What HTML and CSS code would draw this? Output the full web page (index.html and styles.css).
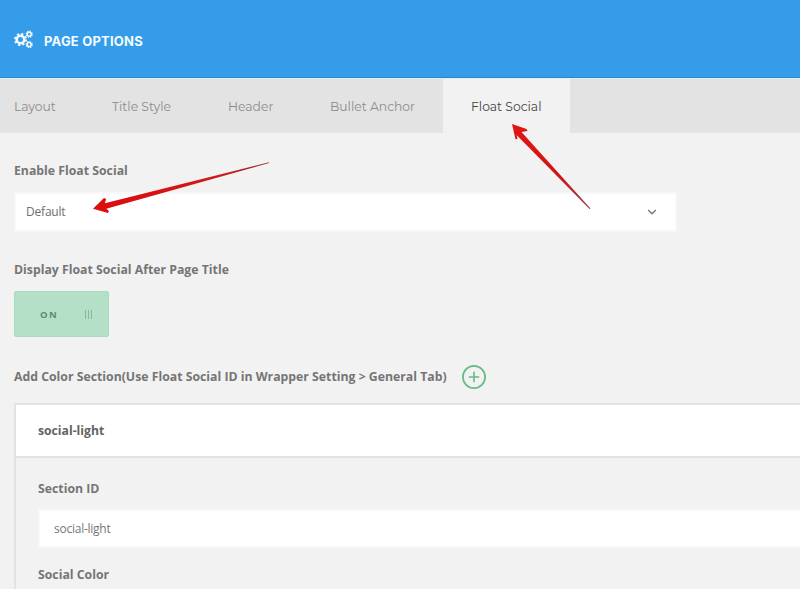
FILE: index.html
```html
<!DOCTYPE html>
<html lang="en">
<head>
<meta charset="utf-8">
<title>Page Options</title>
<link rel="stylesheet" href="styles.css">
</head>
<body>
<header class="header">
  <svg class="gears" width="20" height="19" viewBox="0 0 20 19" fill="none" stroke="#f4fbff">
    <circle cx="6.5" cy="9.5" r="3.8" stroke-width="2.6"/>
    <circle cx="6.5" cy="9.5" r="5.6" stroke-width="1.8" stroke-dasharray="2.2 2.2"/>
    <circle cx="15.2" cy="4.2" r="2" stroke-width="1.5"/>
    <circle cx="15.2" cy="4.2" r="3" stroke-width="1.2" stroke-dasharray="1.3 1.05"/>
    <circle cx="15.2" cy="14.6" r="2" stroke-width="1.5"/>
    <circle cx="15.2" cy="14.6" r="3" stroke-width="1.2" stroke-dasharray="1.3 1.05"/>
  </svg>
  <h1 class="title">PAGE OPTIONS</h1>
</header>
<nav class="tabs">
  <a class="tab">Layout</a>
  <a class="tab tab-title">Title Style</a>
  <a class="tab tab-header">Header</a>
  <a class="tab tab-bullet">Bullet Anchor</a>
  <a class="tab active">Float Social</a>
</nav>
<main class="content">
  <h2 class="label">Enable Float Social</h2>
  <div class="select">
    <span>Default</span>
    <svg width="10" height="8" viewBox="0 0 10 8" fill="none" stroke="#777" stroke-width="1.4"><path d="M1.2 2 5 5.8 8.8 2"/></svg>
  </div>
  <h2 class="label label-display">Display Float Social After Page Title</h2>
  <div class="toggle"><span>ON</span><i class="grip"></i></div>
  <div class="add-row">
    <h2 class="label label-add">Add Color Section(Use Float Social ID in Wrapper Setting &gt; General Tab)</h2>
    <svg width="26" height="26" viewBox="0 0 26 26" fill="none" stroke="#66bb7f"><circle cx="13" cy="13" r="11.1" stroke-width="1.7"/><path d="M7.8 13h10.4M13 7.8v10.4" stroke-width="1.6"/></svg>
  </div>
  <section class="panel">
    <h3 class="panel-title">social-light</h3>
    <div class="panel-body">
      <h2 class="label">Section ID</h2>
      <div class="field">social-light</div>
      <h2 class="label">Social Color</h2>
    </div>
  </section>
</main>
<svg class="arrows" width="800" height="589" viewBox="0 0 800 589">
  <defs>
    <linearGradient id="up" x1="0" y1="0" x2="1" y2="1"><stop offset="0" stop-color="#e31515"/><stop offset=".6" stop-color="#d01414"/><stop offset="1" stop-color="#963f48"/></linearGradient>
    <linearGradient id="left" x1="0" y1="0" x2="1" y2="0"><stop offset="0" stop-color="#dc0d0d"/><stop offset=".7" stop-color="#d01818"/><stop offset="1" stop-color="#9c2d32"/></linearGradient>
  </defs>
  <path fill="url(#up)" d="M512 124 526.5 129 527.5 131 521.5 132 590.5 208.5 589.5 209 516.8 135.2 517.5 139 515.5 139.3Z"/>
  <path fill="url(#left)" d="M93 208.7 104 198 106.2 199 104.8 203.2 269 162.2 269 163 106.3 208.7 109 211 108 213Z"/>
</svg>
</body>
</html>
```
FILE: styles.css
```css
* { box-sizing: border-box; }
body {
  margin: 0;
  height: 589px;
  overflow: hidden;
  position: relative;
  background: #f2f2f2;
  font-family: "Open Sans", sans-serif;
  color: #6e6e6e;
}
.header {
  height: 78px;
  padding: 0 0 0 14px;
  display: flex;
  align-items: center;
  gap: 10px;
  background: #349ce8;
  border-bottom: 1px solid #2b89d0;
}
.gears { margin-top: 1px; }
.title {
  margin: 4px 0 0;
  font: 700 13px/20px Inter, sans-serif;
  letter-spacing: .2px;
  color: #f4fbff;
}
.tabs {
  height: 55px;
  display: flex;
  background: #e3e3e3;
  border-top: 1px solid #e6edf0;
  font: 400 12.35px/55px Montserrat, Inter, sans-serif;
  color: #8c8c8c;
}
.tab { height: 54px; padding-left: 14px; width: 84px; white-space: nowrap; }
.tab-title { padding-left: 28px; width: 116px; }
.tab-header { padding-left: 28px; width: 102px; }
.tab-bullet { padding-left: 28px; width: 141px; }
.active {
  width: 127px;
  padding-left: 28px;
  background: #f2f2f2;
  color: #444;
}
.content {
  height: 456px;
  padding: 29px 0 0 14px;
  overflow: hidden;
}
.label {
  margin: 0;
  font-size: 12.27px;
  line-height: 18px;
  font-weight: 700;
  color: #757575;
  white-space: nowrap;
}
.select {
  width: 663px;
  height: 40px;
  margin-top: 12px;
  padding: 0 18px 0 10px;
  display: flex;
  align-items: center;
  justify-content: space-between;
  background: #fff;
  border: 2px solid #f8f8f8;
  font-size: 12px;
  letter-spacing: -.2px;
  line-height: 18px;
}
.label-display { margin-top: 29px; }
.toggle {
  width: 95px;
  height: 46px;
  margin-top: 12px;
  padding: 0 16px 0 25px;
  display: flex;
  align-items: center;
  justify-content: space-between;
  background: #b4e0c8;
  border: 1px solid #aadabf;
  border-radius: 2px;
  font-size: 9.5px;
  font-weight: 700;
  letter-spacing: 1.5px;
  color: #5c8c70;
}
.grip {
  width: 7px;
  height: 9px;
  background: repeating-linear-gradient(90deg, #87b69c 0 1px, transparent 1px 3px);
}
.add-row {
  height: 26px;
  margin-top: 27px;
  display: flex;
  align-items: center;
  gap: 14.5px;
}
.label-add { margin-top: -1px; }
.panel {
  height: 220px;
  margin-top: 13px;
  border: 2px solid #e3e3e3;
  border-right: 0;
}
.panel-title {
  height: 53px;
  margin: 0;
  padding-left: 22px;
  background: #fff;
  border-bottom: 2px solid #e3e3e3;
  font-size: 12.2px;
  line-height: 52px;
  color: #636363;
}
.panel-body { padding: 22px 0 0 22px; }
.field {
  height: 39px;
  margin: 11px 0 18px;
  padding-left: 14px;
  background: #fff;
  border: 2px solid #f8f8f8;
  border-right: 0;
  font-size: 12px;
  letter-spacing: -.25px;
  line-height: 35px;
  color: #777;
}
.arrows { position: absolute; left: 0; top: 0; }
```
